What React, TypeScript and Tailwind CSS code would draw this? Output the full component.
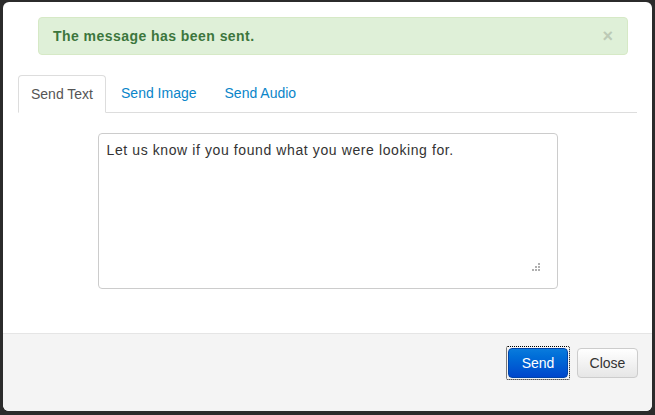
import React from 'react';

const tabs = ['Send Text', 'Send Image', 'Send Audio'];

const tabClass = [
  'px-[12px] flex items-center text-[14px] text-[#555555] bg-white border border-[#dddddd] border-b-white rounded-t-[4px] -mb-px',
  'pl-[15px] pr-[14px] flex items-center text-[14px] text-[#0a85c9]',
  'pl-[14px] pr-[14px] flex items-center text-[14px] text-[#0a85c9]',
];

const App: React.FC = () => {
  return (
    <div className="w-[655px] h-[415px] bg-[#2b2b2b] pt-[2px] pl-[3px] pr-[3px] pb-[4px] font-['Liberation_Sans',Arial,sans-serif]">
      <div className="h-full bg-white rounded-[6px] flex flex-col overflow-hidden">
        <div className="flex-1 px-[15px] pt-[15px]">
          {/* alert */}
          <div className="ml-[20px] mr-[9px] h-[38px] bg-[#dff0d8] border border-[#d6e9c6] rounded-[4px] flex items-center justify-between pl-[14px] pr-[14px]">
            <span className="text-[14px] font-bold tracking-[0.45px] text-[#3c763d]">The message has been sent.</span>
            <span className="text-[18px] leading-none font-bold text-[#bccab6]">×</span>
          </div>

          {/* tabs */}
          <div className="mt-[20px] flex border-b border-[#dddddd] h-[38px]">
            {tabs.map((t, i) => (
              <div key={t} className={tabClass[i]}>
                {t}
              </div>
            ))}
          </div>

          {/* textarea */}
          <div className="mt-[20px] flex justify-center">
            <div className="relative w-[460px] h-[156px] border border-[#cccccc] rounded-[4px] pl-[8px] pr-[7px] py-[6px] text-[14px] tracking-[0.6px] text-[#333333]">
              Let us know if you found what you were looking for.
              <svg className="absolute right-[16px] bottom-[16px]" width="9" height="9" viewBox="0 0 9 9">
                <rect x="6" y="0" width="2" height="2" fill="#b0b0b0" />
                <rect x="3" y="3" width="2" height="2" fill="#b0b0b0" />
                <rect x="6" y="3" width="2" height="2" fill="#b0b0b0" />
                <rect x="0" y="6" width="2" height="2" fill="#b0b0b0" />
                <rect x="3" y="6" width="2" height="2" fill="#b0b0b0" />
                <rect x="6" y="6" width="2" height="2" fill="#b0b0b0" />
              </svg>
            </div>
          </div>
        </div>

        {/* footer */}
        <div className="h-[78px] border-t border-[#e5e5e5] bg-[#f4f4f4] flex justify-end items-start gap-[7px] pr-[14px] pt-[12px]">
          <div className="p-px border border-dotted border-black rounded-[2px]">
            <button className="w-[60px] h-[30px] rounded-[4px] text-[14px] text-white bg-gradient-to-b from-[#0a7bdc] to-[#0046cc] border border-[#0044aa]">
              Send
            </button>
          </div>
          <button className="mt-[2px] w-[61px] h-[30px] rounded-[4px] text-[14px] text-[#333333] bg-gradient-to-b from-white to-[#e6e6e6] border border-[#cccccc]">
            Close
          </button>
        </div>
      </div>
    </div>
  );
};

export default App;
